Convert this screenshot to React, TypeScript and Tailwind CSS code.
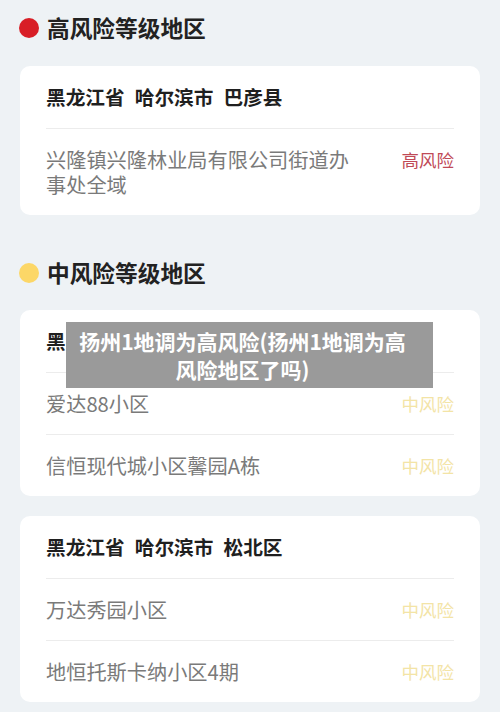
import React from "react";

const font = { fontFamily: '"Noto Sans CJK SC", "Noto Sans", sans-serif' };

type Row = { name: React.ReactNode; level: "high" | "mid" };

function Header({ color, text }: { color: string; text: string }) {
  return (
    <div className="flex h-[40px] items-center pl-[19px]">
      <span className={`block h-[20px] w-[20px] rounded-full ${color}`} />
      <span className="ml-[8px] text-[22.7px] font-bold leading-none text-[#222]">{text}</span>
    </div>
  );
}

function Card({ title, rows }: { title: string[]; rows: Row[] }) {
  return (
    <div className="mx-[20px] rounded-[10px] bg-white px-[26px]">
      <div className="flex h-[62px] items-center gap-[10px] text-[19.7px] font-bold text-[#1f1f1f]">
        {title.map((t) => (
          <span key={t}>{t}</span>
        ))}
      </div>
      {rows.map((r, i) => (
        <div key={i} className="flex items-start justify-between border-t border-[#ececec] py-[18px]">
          <div className="max-w-[315px] text-[20.2px] leading-[25px] text-[#7a7a7a]">{r.name}</div>
          <div
            className={`text-[17.5px] leading-[25px] ${r.level === "high" ? "text-[#c04a57]" : "text-[#f3e4a6]"}`}
          >
            {r.level === "high" ? "高风险" : "中风险"}
          </div>
        </div>
      ))}
    </div>
  );
}

export default function App() {
  return (
    <div className="relative min-h-[712px] w-[500px] overflow-hidden bg-[#eef2f5] pt-[8px]" style={font}>
      <Header color="bg-[#d81e26]" text="高风险等级地区" />
      <div className="mt-[18px]">
        <Card
          title={["黑龙江省", "哈尔滨市", "巴彦县"]}
          rows={[{ name: "兴隆镇兴隆林业局有限公司街道办事处全域", level: "high" }]}
        />
      </div>
      <div className="mt-[38px]">
        <Header color="bg-[#fcd767]" text="中风险等级地区" />
      </div>
      <div className="mt-[17px] flex flex-col gap-[20px]">
        <Card
          title={["黑龙江省", "哈尔滨市", "呼兰区"]}
          rows={[
            { name: "爱达88小区", level: "mid" },
            { name: "信恒现代城小区馨园A栋", level: "mid" },
          ]}
        />
        <Card
          title={["黑龙江省", "哈尔滨市", "松北区"]}
          rows={[
            { name: "万达秀园小区", level: "mid" },
            { name: "地恒托斯卡纳小区4期", level: "mid" },
          ]}
        />
      </div>
      <div className="absolute left-[66px] top-[322px] flex h-[66px] w-[367px] flex-col items-center justify-center bg-[#9a9a9a] pr-[14px] text-center text-[21px] font-bold leading-[28px] text-white">
        <span>扬州1地调为高风险(扬州1地调为高</span>
        <span>风险地区了吗)</span>
      </div>
    </div>
  );
}
